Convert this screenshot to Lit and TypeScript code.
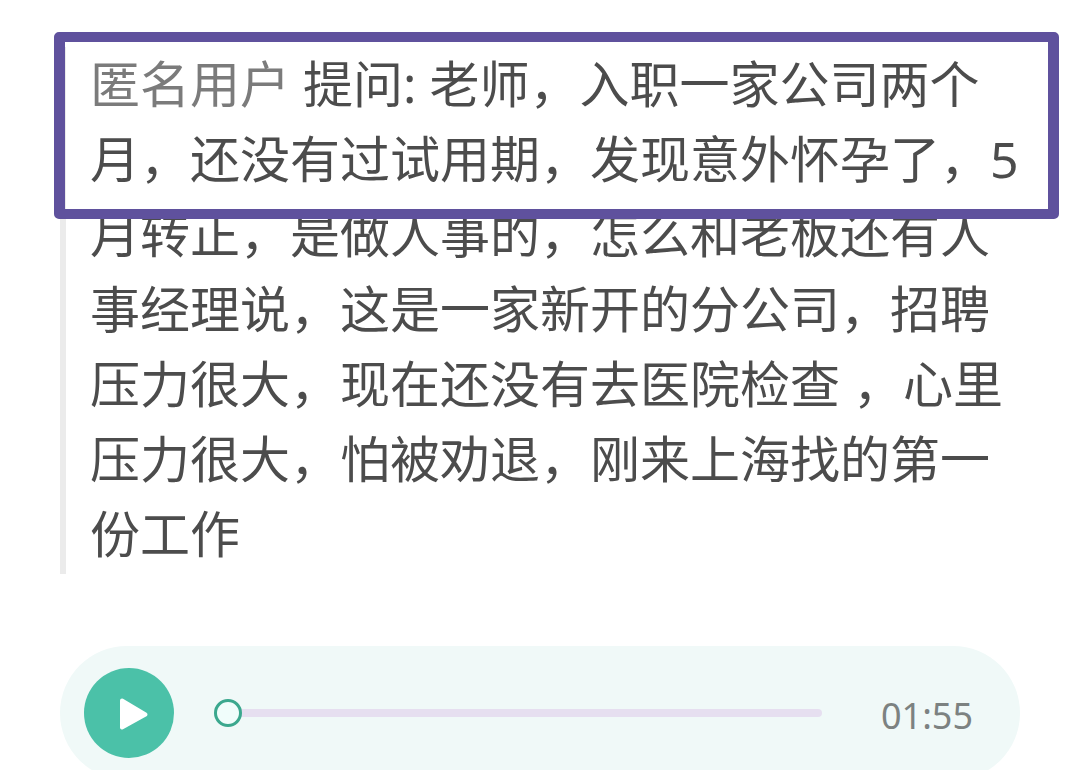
import { LitElement, html, css } from "lit";
import { customElement, property, state } from "lit/decorators.js";

@customElement("question-quote")
class QuestionQuote extends LitElement {
  @property() author = "";
  @property() text = "";

  static styles = css`
    :host {
      display: block;
    }
    .quote {
      position: relative;
      margin: 0;
      padding: 0 0 2px 24px;
      border-left: 6px solid #ebebeb;
    }
    .text {
      margin: 0;
      font-size: 50px;
      line-height: 75px;
      color: #4c4c4c;
    }
    .author {
      color: #7b7b7b;
    }
    /* Marker frame laid over the first two lines */
    .marker {
      position: absolute;
      top: -15px;
      left: -12px;
      right: -39px;
      height: 187px;
      box-sizing: border-box;
      border: 10px solid #5f519d;
      border-left-width: 11px;
      border-right-width: 11px;
      border-radius: 5px;
      pointer-events: none;
    }
  `;

  render() {
    return html`
      <blockquote class="quote">
        <p class="text"><span class="author">${this.author}</span> 提问: ${this.text}</p>
        <div class="marker"></div>
      </blockquote>
    `;
  }
}

@customElement("audio-player")
class AudioPlayer extends LitElement {
  @property() duration = "";
  @state() private position = 0;

  static styles = css`
    :host {
      display: block;
    }
    .player {
      display: flex;
      align-items: center;
      padding: 22px 47px 22px 24px;
      border-radius: 67px;
      background: #f0f9f8;
    }
    .play {
      display: flex;
      flex: none;
      width: 90px;
      height: 90px;
      padding: 0;
      border: 0;
      border-radius: 50%;
      background: #4bc1a8;
      cursor: pointer;
    }
    .icon {
      width: 90px;
      height: 90px;
    }
    .seek {
      appearance: none;
      flex: 1;
      min-width: 0;
      height: 28px;
      margin: 0 59px 0 40px;
      background: transparent;
    }
    .seek::-webkit-slider-runnable-track {
      height: 8px;
      border-radius: 4px;
      background: #e6dff0;
    }
    .seek::-webkit-slider-thumb {
      appearance: none;
      box-sizing: border-box;
      width: 28px;
      height: 28px;
      margin-top: -10px;
      border: 3px solid #3ba88e;
      border-radius: 50%;
      background: #f0fdfb;
    }
    .time {
      padding-top: 6px;
      font-size: 36px;
      line-height: 48px;
      color: #7c8281;
    }
  `;

  render() {
    return html`
      <div class="player">
        <button class="play" type="button" aria-label="播放">
          <svg class="icon" viewBox="0 0 90 90" aria-hidden="true">
            <path
              d="M38 32.5 L61.5 46.5 L38 59.5 Z"
              fill="#fff"
              stroke="#fff"
              stroke-width="4"
              stroke-linejoin="round"
            />
          </svg>
        </button>
        <input
          class="seek"
          type="range"
          min="0"
          max="115"
          aria-label="播放进度"
          .value=${String(this.position)}
          @input=${(e: Event) => {
            this.position = Number((e.target as HTMLInputElement).value);
          }}
        />
        <time class="time">${this.duration}</time>
      </div>
    `;
  }
}

@customElement("app-root")
class AppRoot extends LitElement {
  static styles = css`
    :host {
      display: block;
      background: #fff;
      font-family: "Noto Sans", "Noto Sans CJK SC", sans-serif;
    }
    .page {
      display: flex;
      flex-direction: column;
      gap: 72px;
      padding: 47px 60px 0;
    }
  `;

  render() {
    return html`
      <main class="page" lang="zh-CN">
        <question-quote
          author="匿名用户"
          text="老师，入职一家公司两个月，还没有过试用期，发现意外怀孕了，5月转正，是做人事的，怎么和老板还有人事经理说，这是一家新开的分公司，招聘压力很大，现在还没有去医院检查 ，心里压力很大，怕被劝退，刚来上海找的第一份工作"
        ></question-quote>
        <audio-player duration="01:55"></audio-player>
      </main>
    `;
  }
}
